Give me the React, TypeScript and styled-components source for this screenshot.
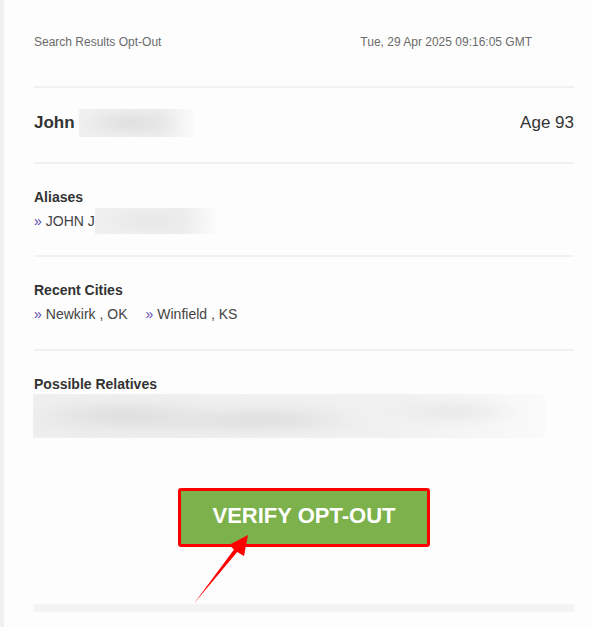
import * as React from "react";
import styled, { createGlobalStyle } from "styled-components";

const GlobalStyle = createGlobalStyle`
  html, body {
    margin: 0;
    padding: 0;
    background: #fdfdfd;
  }
  body {
    font-family: "Liberation Sans", Arial, sans-serif;
    color: #333;
  }
`;

const Page = styled.div`
  min-height: 627px;
  box-sizing: border-box;
  border-left: 4px solid #efefef;
  padding: 0 18px 0 30px;
`;

const Header = styled.div`
  display: flex;
  justify-content: space-between;
  align-items: center;
  padding: 34px 42px 36px 0;
  font-size: 12px;
  line-height: 16px;
  color: #6b6b6b;
`;

const Section = styled.div<{ $pt?: number; $pb?: number }>`
  border-top: 2px solid #f1f1f1;
  padding: ${(p) => p.$pt ?? 24}px 0 ${(p) => p.$pb ?? 22}px;
`;

const NameRow = styled.div`
  display: flex;
  align-items: center;
  justify-content: space-between;
  height: 28px;
  font-size: 17px;
`;

const Name = styled.div`
  display: flex;
  align-items: center;
  font-weight: bold;
  gap: 4px;
`;

const Age = styled.div`
  color: #333;
`;

const Label = styled.div`
  font-size: 14px;
  line-height: 18px;
  font-weight: bold;
  color: #333;
`;

const ItemLine = styled.div`
  display: flex;
  align-items: center;
  height: 26px;
  margin-top: 2px;
  font-size: 14px;
  color: #444;
  gap: 18px;
`;

const Item = styled.span`
  display: inline-flex;
  align-items: center;
  white-space: pre;
`;

const Chevron = styled.span`
  color: #5a45b0;
  margin-right: 4px;
`;

const Blur = styled.span<{ $w: number; $h: number }>`
  display: inline-block;
  position: relative;
  overflow: hidden;
  width: ${(p) => p.$w}px;
  height: ${(p) => p.$h}px;
  background: linear-gradient(90deg, #f0f0f0 0%, #ededed 70%, #fbfbfb 100%);
`;

const Smudge = styled.span`
  display: block;
  height: 100%;
  filter: blur(6px);
`;

const RelativesBlur = styled.div`
  margin-top: 1px;
  margin-left: -1px;
  width: 512px;
  height: 44px;
  overflow: hidden;
  background: linear-gradient(90deg, #efefef 0%, #f1f1f1 70%, #fafafa 100%);
`;

const ButtonArea = styled.div`
  display: flex;
  justify-content: center;
  padding: 50px 0 57px;
`;

const ButtonWrap = styled.div`
  position: relative;
`;

const VerifyButton = styled.button`
  display: block;
  width: 252px;
  height: 59px;
  box-sizing: border-box;
  border: 3px solid #ff0000;
  border-radius: 3px;
  background: #7cb14b;
  color: #fff;
  font-family: "Liberation Sans", Arial, sans-serif;
  font-weight: bold;
  font-size: 22px;
  line-height: 22px;
  cursor: pointer;
  padding: 0 0 3px;
`;

const Arrow = styled.svg`
  position: absolute;
  left: 10px;
  top: 40px;
  overflow: visible;
`;

const BottomBar = styled.div`
  height: 8px;
  background: #f4f4f4;
`;

export default function App() {
  return (
    <>
      <GlobalStyle />
      <Page>
        <Header>
          <span>Search Results Opt-Out</span>
          <span>Tue, 29 Apr 2025 09:16:05 GMT</span>
        </Header>

        <Section $pt={21} $pb={25}>
          <NameRow>
            <Name>
              John
              <Blur $w={116} $h={28}>
                <Smudge
                  style={{
                    background:
                      "radial-gradient(ellipse 45% 30% at 45% 50%, #d4d4d4 0%, #e2e2e2 60%, transparent 100%)",
                  }}
                />
              </Blur>
            </Name>
            <Age>Age 93</Age>
          </NameRow>
        </Section>

        <Section $pb={21}>
          <Label>Aliases</Label>
          <ItemLine>
            <Item>
              <Chevron>»</Chevron>JOHN J
              <Blur $w={121} $h={26}>
                <Smudge
                  style={{
                    background:
                      "radial-gradient(ellipse 45% 25% at 45% 50%, #e0e0e0 0%, #e9e9e9 60%, transparent 100%)",
                  }}
                />
              </Blur>
            </Item>
          </ItemLine>
        </Section>

        <Section>
          <Label>Recent Cities</Label>
          <ItemLine>
            <Item>
              <Chevron>»</Chevron>Newkirk , OK
            </Item>
            <Item>
              <Chevron>»</Chevron>Winfield , KS
            </Item>
          </ItemLine>
        </Section>

        <Section $pb={0}>
          <Label>Possible Relatives</Label>
          <RelativesBlur>
            <Smudge
              style={{
                background:
                  "radial-gradient(ellipse 20% 28% at 18% 45%, #d9d9d9 0%, transparent 100%), radial-gradient(ellipse 20% 28% at 45% 55%, #dadada 0%, transparent 100%), radial-gradient(ellipse 14% 22% at 82% 40%, #e1e1e1 0%, transparent 100%), radial-gradient(ellipse 40% 20% at 30% 70%, #e0e0e0 0%, transparent 100%)",
              }}
            />
          </RelativesBlur>
        </Section>

        <ButtonArea>
          <ButtonWrap>
            <VerifyButton>VERIFY OPT-OUT</VerifyButton>
            <Arrow width="70" height="80" viewBox="0 0 70 80">
              <polygon
                points="60,7 41,17 46,21.5 6,75.5 49.2,23.9 56,28"
                fill="#ff0000"
              />
            </Arrow>
          </ButtonWrap>
        </ButtonArea>

        <BottomBar />
      </Page>
    </>
  );
}
